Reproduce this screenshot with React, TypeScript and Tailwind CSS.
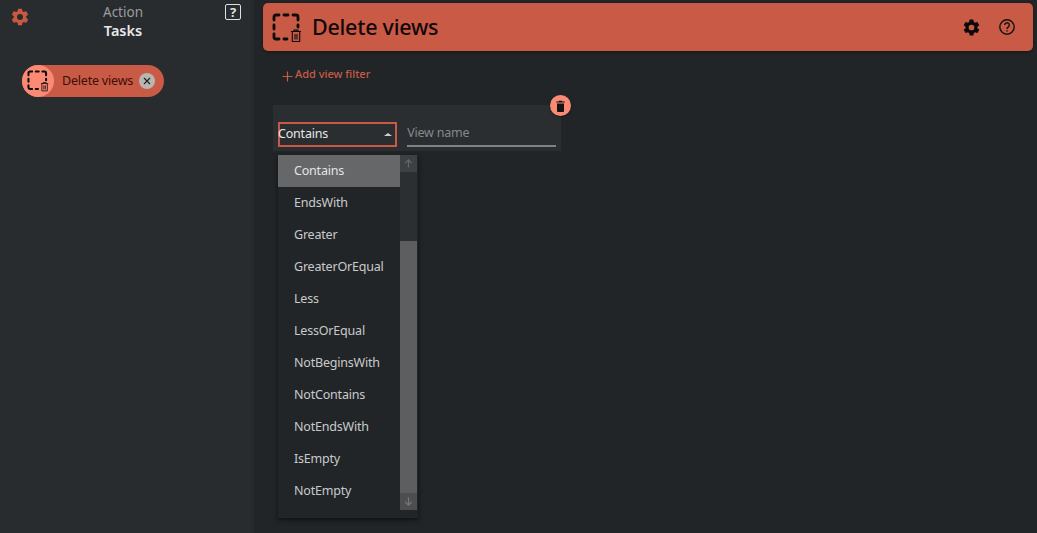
import React from "react";

const items = ["Contains","EndsWith","Greater","GreaterOrEqual","Less","LessOrEqual","NotBeginsWith","NotContains","NotEndsWith","IsEmpty","NotEmpty"];

function SelIcon({ size, color = "#0b0b0b" }: { size: number; color?: string }) {
  return (
    <svg width={size} height={size} viewBox="0 0 30 30" fill="none">
      <path d="M2 7V4a2 2 0 0 1 2-2h3M12 2h4M21 2h3a2 2 0 0 1 2 2v3M2 12v4M2 21v3a2 2 0 0 0 2 2h3M12 26h3M26 12v2" stroke={color} strokeWidth="2.8" strokeLinecap="round" />
      <path d="M19 18.5h10M22 18.5v-1.4h4v1.4M20.3 19v9.5h7.4V19M23 21v5.5M25 21v5.5" stroke={color} strokeWidth="1.1" />
    </svg>
  );
}

function Gear({ size, color }: { size: number; color: string }) {
  return (
    <svg width={size} height={size} viewBox="0 0 24 24" fill={color}>
      <path d="M19.4 13c.04-.33.06-.66.06-1s-.02-.67-.06-1l2.1-1.65c.2-.15.25-.42.13-.64l-2-3.46c-.12-.22-.39-.3-.61-.22l-2.49 1c-.52-.4-1.08-.73-1.69-.98l-.38-2.65A.49.49 0 0 0 14 2h-4c-.25 0-.46.18-.49.42l-.38 2.65c-.61.25-1.17.59-1.69.98l-2.49-1c-.23-.09-.49 0-.61.22l-2 3.46c-.13.22-.07.49.12.64L4.57 11c-.04.33-.07.67-.07 1s.03.67.07 1l-2.11 1.65c-.19.15-.24.42-.12.64l2 3.46c.12.22.39.3.61.22l2.49-1c.52.4 1.08.73 1.69.98l.38 2.65c.03.24.24.42.49.42h4c.25 0 .46-.18.49-.42l.38-2.65c.61-.25 1.17-.59 1.69-.98l2.49 1c.23.09.49 0 .61-.22l2-3.46c.12-.22.07-.49-.12-.64L19.4 13zM12 15.6a3.6 3.6 0 1 1 0-7.2 3.6 3.6 0 0 1 0 7.2z" />
    </svg>
  );
}

export default function App() {
  return (
    <div className="flex h-[533px] w-[1037px] overflow-hidden bg-[#212528] font-['Noto_Sans','Open_Sans',sans-serif]">
      <aside className="flex w-[254px] shrink-0 flex-col border-r-[4px] border-[#262a2d] bg-[#282c2f]">
        <div className="flex h-[40px] items-start pl-[10px] pr-[9px] pt-[3px]">
          <div className="mt-[4px]"><Gear size={20} color="#c8583f" /></div>
          <div className="ml-[72px] flex w-[42px] flex-col items-center">
            <span className="whitespace-nowrap text-[13.5px] leading-[18px] text-[#9b9d9f]">Action</span>
            <span className="whitespace-nowrap text-[14.5px] font-semibold leading-[18px] text-[#e8e8e8]">Tasks</span>
          </div>
          <div className="ml-auto mt-[1px] flex h-[16px] w-[16px] items-center justify-center rounded-[2px] border-[1.5px] border-[#e0e0e0] text-[13px] font-bold leading-none text-[#e0e0e0]">?</div>
        </div>
        <div className="ml-[22px] mt-[25px] flex h-[32px] w-[142px] items-center rounded-full bg-[#c95a45]">
          <div className="flex h-[32px] w-[32px] items-center justify-center rounded-full bg-[#fb8a74]"><SelIcon size={22} /></div>
          <span className="ml-[8px] whitespace-nowrap text-[12.5px] tracking-[-0.2px] text-[#3d0e06]">Delete views</span>
          <div className="ml-[6px] flex h-[16px] w-[16px] items-center justify-center rounded-full bg-[#b9b5b3]">
            <svg width="8" height="8" viewBox="0 0 8 8" stroke="#222" strokeWidth="1.2"><path d="M1 1l6 6M7 1L1 7" /></svg>
          </div>
        </div>
      </aside>
      <main className="flex min-w-0 flex-1 flex-col pl-[9px] pr-[4px] pt-[3px]">
        <header className="flex h-[48px] items-center rounded-[5px] bg-[#c95a45] pl-[9px] pr-[17px] shadow-[0_1px_3px_rgba(0,0,0,0.4)]">
          <div className="mt-[2px]"><SelIcon size={30} /></div>
          <h1 className="ml-[10px] text-[21.5px] font-medium leading-none tracking-[-0.25px] text-[#12080a]">Delete views</h1>
          <div className="ml-auto flex items-center gap-[17px]">
            <Gear size={19} color="#0a0a0a" />
            <svg width="18" height="18" viewBox="0 0 18 18" fill="none" stroke="#111" strokeWidth="1.4">
              <circle cx="9" cy="9" r="7.2" />
              <path d="M6.7 7.1a2.3 2.3 0 1 1 3.5 2c-.8.5-1.2.9-1.2 1.8" />
              <path d="M9 12.2v1.4" />
            </svg>
          </div>
        </header>
        <div className="ml-[19px] mt-[14px] flex h-[18px] items-center text-[#c95a45]">
          <svg className="mt-[5px]" width="11" height="11" viewBox="0 0 11 11" stroke="#c95a45" strokeWidth="1.2"><path d="M5.5 0.5v10M0.5 5.5h10" /></svg>
          <span className="ml-[2px] text-[11px] font-medium">Add view filter</span>
        </div>
        <div className="relative ml-[10px] mt-[22px] h-[46px] w-[288px] bg-[#2a2e31] pl-[5px] pr-[5px] pt-[16px]">
          <div className="flex items-end">
            <div className="flex h-[25px] w-[120px] items-center justify-between border-2 border-[#c65a46] pb-[1px] pr-[3px] text-[12.5px] leading-none tracking-[-0.2px] text-[#e6e6e6]">
              <span className="-ml-[2px]">Contains</span>
              <span className="h-0 w-0 border-x-[4px] border-b-[3px] border-x-transparent border-b-[#cfcfcf]" />
            </div>
            <div className="ml-[10px] flex h-[26px] w-[150px] items-center border-b-2 border-[#7f8285] text-[12.5px] tracking-[-0.2px] text-[#85888a]">View name</div>
          </div>
          <div className="absolute right-[-10px] top-[-10px] flex h-[21px] w-[21px] items-center justify-center rounded-full bg-[#fb8a74] shadow-[0_1px_2px_rgba(0,0,0,0.4)]">
            <svg width="11" height="12" viewBox="0 0 11 12" fill="#141414"><path d="M2 3.4h7V11a1 1 0 0 1-1 1H3a1 1 0 0 1-1-1zM1.2 1.4h2.4l.5-.7h2.8l.5.7h2.4v1.1H1.2z" /></svg>
          </div>
          <div className="absolute left-[5px] top-[50px] z-10 flex h-[363px] w-[140px] bg-[#212528] shadow-[0_2px_5px_rgba(0,0,0,0.55)]">
            <ul className="flex w-[122px] flex-col">
              {items.map((t, i) => (
                <li key={t} className={`flex h-[32px] items-center pl-[16px] text-[12.5px] leading-none tracking-[-0.2px] ${i === 0 ? "bg-[#656768] text-[#e4e4e4]" : "text-[#c9cacb]"}`}>{t}</li>
              ))}
            </ul>
            <div className="flex h-[355px] w-[17px] flex-col bg-[#2b2f32]">
              <div className="flex h-[17px] items-center justify-center bg-[#3e4144]">
                <svg width="9" height="9" viewBox="0 0 9 9" fill="none" stroke="#65686a" strokeWidth="1.2"><path d="M4.5 8.5V1M1.2 4.2l3.3-3.3 3.3 3.3" /></svg>
              </div>
              <div className="mt-[69px] flex-1 bg-[#5c5e60]" />
              <div className="flex h-[17px] items-center justify-center bg-[#4c4e50]">
                <svg width="9" height="9" viewBox="0 0 9 9" fill="none" stroke="#77797b" strokeWidth="1.2"><path d="M4.5 0.5V8M1.2 4.8l3.3 3.3 3.3-3.3" /></svg>
              </div>
            </div>
          </div>
        </div>
      </main>
    </div>
  );
}
